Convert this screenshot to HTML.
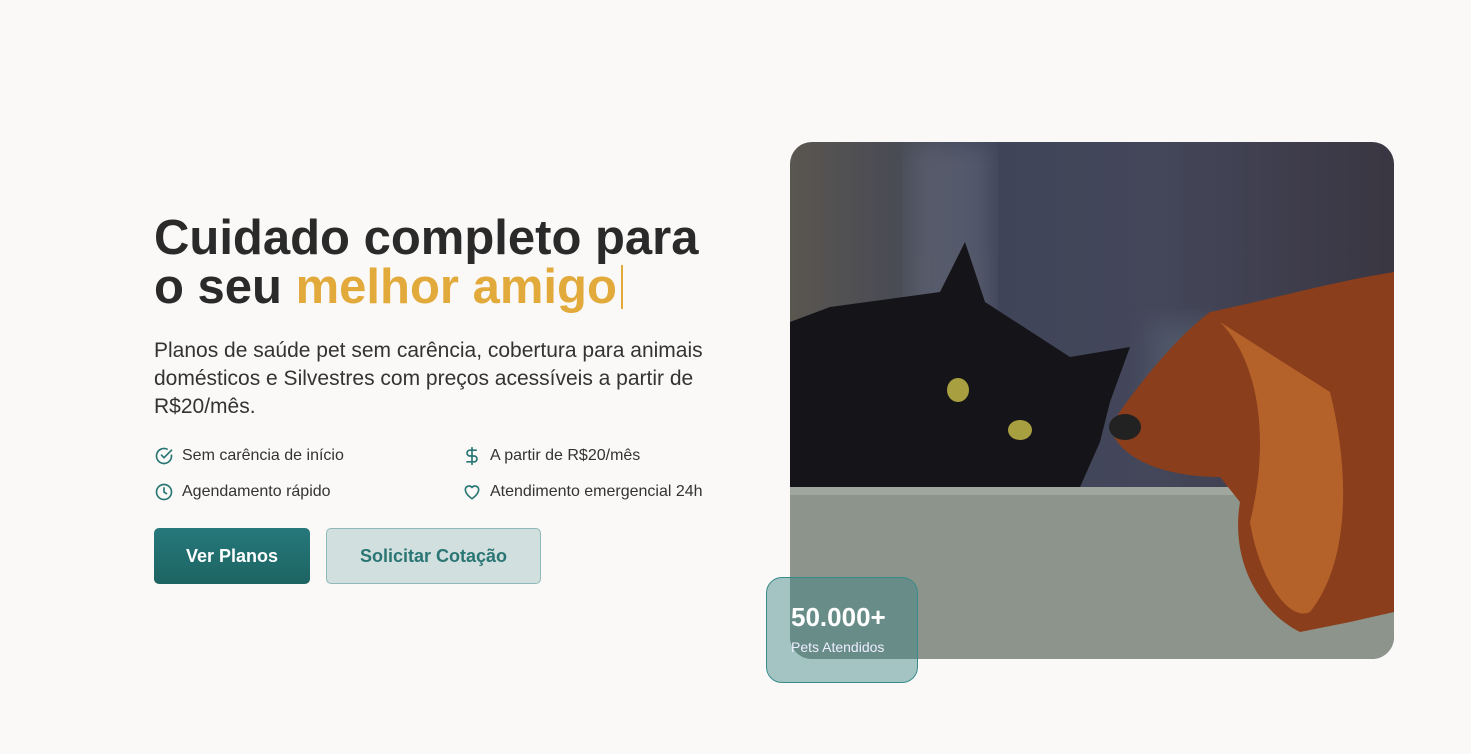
<!DOCTYPE html>
<html><head><meta charset="utf-8"><style>
*{margin:0;padding:0;box-sizing:border-box}
body{width:1471px;height:754px;background:#faf9f7;font-family:"Liberation Sans",sans-serif;position:relative;overflow:hidden;color:#2b2b2b}
h1{position:absolute;left:154px;top:214px;font-size:49px;line-height:49px;font-weight:700;color:#2a2a2a}
h1 span{color:#e2a93b}
h1 i{display:inline-block;width:2px;height:44px;background:#e2a93b;vertical-align:-6px;margin-left:4px}
p.lead{position:absolute;left:154px;top:337px;width:600px;font-size:21px;line-height:28px;color:#333}
.f{position:absolute;font-size:16px;color:#333;display:flex;align-items:center;gap:8px}
.f svg{width:20px;height:20px}
.btn{position:absolute;top:528px;height:56px;border-radius:5px;font-size:18px;font-weight:700;display:flex;align-items:center;justify-content:center}
.b1{left:154px;width:156px;background:linear-gradient(#26787a,#1d6463);color:#fff}
.b2{left:326px;width:215px;background:#d1dfde;border:1px solid #8fb9b8;color:#2a7674}
.img{position:absolute;left:790px;top:142px;width:604px;height:517px;border-radius:22px;overflow:hidden}
.badge{position:absolute;left:766px;top:577px;width:152px;height:106px;border-radius:16px;border:1px solid #3a8c8a;background:rgba(60,130,130,0.45);color:#fff;padding-left:24px;padding-top:24px}
.badge b{font-size:26px;display:block}
.badge small{font-size:14px;display:block;margin-top:6px;color:#eef}
</style></head><body>
<h1>Cuidado completo para<br>o seu <span>melhor amigo</span><i></i></h1>
<p class="lead">Planos de saúde pet sem carência, cobertura para animais domésticos e Silvestres com preços acessíveis a partir de R$20/mês.</p>
<div class="f" style="left:154px;top:446px"><svg viewBox="0 0 24 24" fill="none" stroke="#2a7674" stroke-width="2" stroke-linecap="round"><path d="M21 11v1a9 9 0 1 1-5.3-8.2"/><path d="M9 11l3 3 9-9"/></svg>Sem carência de início</div>
<div class="f" style="left:462px;top:446px"><svg viewBox="0 0 24 24" fill="none" stroke="#2a7674" stroke-width="2" stroke-linecap="round"><path d="M12 2v20M17 5H9.5a3.5 3.5 0 0 0 0 7h5a3.5 3.5 0 0 1 0 7H6"/></svg>A partir de R$20/mês</div>
<div class="f" style="left:154px;top:482px"><svg viewBox="0 0 24 24" fill="none" stroke="#2a7674" stroke-width="2" stroke-linecap="round"><circle cx="12" cy="12" r="9"/><path d="M12 7v5l3 2"/></svg>Agendamento rápido</div>
<div class="f" style="left:462px;top:482px"><svg viewBox="0 0 24 24" fill="none" stroke="#2a7674" stroke-width="2" stroke-linejoin="round"><path d="M12 20s-8-5-8-11a4.5 4.5 0 0 1 8-2.5A4.5 4.5 0 0 1 20 9c0 6-8 11-8 11z"/></svg>Atendimento emergencial 24h</div>
<div class="btn b1">Ver Planos</div>
<div class="btn b2">Solicitar Cotação</div>
<div class="img"><svg width="604" height="517" viewBox="0 0 604 517">
<defs><linearGradient id="bg" x1="0" y1="0" x2="1" y2="0"><stop offset="0" stop-color="#5a5650"/><stop offset=".3" stop-color="#3e4458"/><stop offset=".6" stop-color="#44475a"/><stop offset="1" stop-color="#3a3642"/></linearGradient>
<filter id="bl"><feGaussianBlur stdDeviation="12"/></filter></defs>
<rect width="604" height="517" fill="url(#bg)"/>
<rect x="120" y="0" width="80" height="340" fill="#6a6f80" opacity=".5" filter="url(#bl)"/>
<rect x="360" y="180" width="200" height="130" fill="#5a6878" opacity=".5" filter="url(#bl)"/>
<rect x="0" y="345" width="604" height="172" fill="#8c948b"/>
<rect x="0" y="345" width="604" height="8" fill="#a0a79e"/>
<path d="M0 180 L40 165 L150 150 L175 100 L195 160 L280 215 L340 205 L320 260 L310 300 L290 345 L0 345Z" fill="#151419"/>
<ellipse cx="168" cy="248" rx="11" ry="12" fill="#a8a040"/>
<ellipse cx="230" cy="288" rx="12" ry="10" fill="#a8a040"/>
<path d="M604 130 C540 140 470 160 420 170 C380 200 335 260 320 285 C330 320 380 335 430 335 L450 360 C440 420 470 470 510 490 L560 480 L604 470Z" fill="#8a3e1c"/>
<path d="M430 180 C470 220 480 300 460 380 C470 440 500 480 520 470 C560 420 560 330 540 250 Z" fill="#b5622a"/>
<ellipse cx="335" cy="285" rx="16" ry="13" fill="#222"/>
</svg></div>
<div class="badge"><b>50.000+</b><small>Pets Atendidos</small></div>
</body></html>
